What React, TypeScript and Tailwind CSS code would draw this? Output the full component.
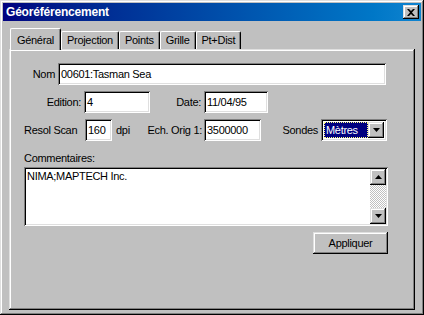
import type { ReactNode } from 'react'

const raised =
    'shadow-[inset_-1px_-1px_#000000,inset_1px_1px_#dfdfdf,inset_-2px_-2px_#808080,inset_2px_2px_#ffffff]'
const sunken =
    'shadow-[inset_1px_1px_#808080,inset_-1px_-1px_#ffffff,inset_2px_2px_#000000,inset_-2px_-2px_#dfdfdf]'

const TABS = ['Projection', 'Points', 'Grille', 'Pt+Dist']

function Field({ value, className }: { value: string; className: string }) {
    return (
        <div className={`h-[22px] bg-white flex items-center pl-[3px] text-black ${sunken} ${className}`}>
            {value}
        </div>
    )
}

function Label({ children, className }: { children: ReactNode; className: string }) {
    return <div className={`text-black whitespace-nowrap ${className}`}>{children}</div>
}

function Arrow({ down }: { down?: boolean }) {
    return (
        <svg width="7" height="4" viewBox="0 0 7 4">
            <path d={down ? 'M0 0h7L3.5 4z' : 'M0 4h7L3.5 0z'} fill="#000" />
        </svg>
    )
}

export default function App() {
    return (
        <div
            className={`w-[424px] h-[315px] bg-[#c0c0c0] flex flex-col text-[11px] tracking-[-0.3px] ${raised}`}
            style={{ fontFamily: '"Liberation Sans", Arial, sans-serif' }}
        >
            {/* Title bar */}
            <div className="mx-[3px] mt-[3px] h-[18px] flex items-center justify-between pl-[3px] pr-[2px] bg-gradient-to-r from-[#000080] to-[#1084d0]">
                <span className="text-white font-bold text-[12px] tracking-[-0.2px]">Géoréférencement</span>
                <div className={`w-[16px] h-[14px] bg-[#c0c0c0] flex items-center justify-center ${raised}`}>
                    <svg width="8" height="7" viewBox="0 0 8 7">
                        <path d="M0 0h2l2 2 2-2h2L5 3.5 8 7H6L4 5 2 7H0l3-3.5z" fill="#000" />
                    </svg>
                </div>
            </div>

            {/* Tabs */}
            <div className="mt-[7px] ml-[9px] flex items-end h-[21px]">
                <div className="relative z-10 -mb-[1px] ml-[1px] h-[22px] w-[51px] bg-[#c0c0c0] border-t border-l border-white rounded-tl-[2px] border-r border-r-black rounded-tr-[2px] shadow-[inset_-1px_0_#808080] flex items-start justify-center pt-[3px] text-black">
                    Général
                </div>
                {TABS.map(tab => (
                    <div
                        key={tab}
                        className="h-[18px] px-[5px] bg-[#c0c0c0] border-t border-l border-white rounded-tl-[2px] border-r border-r-black rounded-tr-[2px] shadow-[inset_-1px_0_#808080] flex items-center justify-center text-black"
                    >
                        {tab}
                    </div>
                ))}
            </div>

            {/* Panel */}
            <div className={`ml-[9px] w-[406px] h-[261px] flex flex-col pl-[15px] pt-[14px] ${raised}`}>
                <div className="flex items-center">
                    <Label className="w-[31px] text-right">Nom</Label>
                    <Field value="00601:Tasman Sea" className="ml-[3px] w-[328px]" />
                </div>

                <div className="flex items-center mt-[6px]">
                    <Label className="w-[57px] text-right">Edition:</Label>
                    <Field value="4" className="ml-[3px] w-[66px]" />
                    <Label className="w-[51px] text-right">Date:</Label>
                    <Field value="11/04/95" className="ml-[3px] w-[64px]" />
                </div>

                <div className="flex items-center mt-[6px]">
                    <Label className="w-[59px]">Resol Scan</Label>
                    <Field value="160" className="ml-[2px] w-[27px]" />
                    <Label className="ml-[4px] w-[16px]">dpi</Label>
                    <Label className="w-[70px] text-right">Ech. Orig 1:</Label>
                    <Field value="3500000" className="ml-[2px] w-[57px]" />
                    <Label className="w-[57px] text-right">Sondes</Label>
                    <div className={`ml-[3px] w-[66px] h-[22px] bg-white flex items-center p-[3px] ${sunken}`}>
                        <div className="flex-1 h-full bg-[#000080] text-white outline-1 outline-dotted outline-[#ffff80] -outline-offset-1 flex items-center pl-[2px]">
                            Mètres
                        </div>
                        <div className={`w-[16px] h-[16px] bg-[#c0c0c0] flex items-center justify-center ${raised}`}>
                            <Arrow down />
                        </div>
                    </div>
                </div>

                <Label className="mt-[9px] h-[14px]">Commentaires:</Label>
                <div className={`mt-[3px] w-[364px] h-[59px] bg-white flex p-[2px] ${sunken}`}>
                    <div className="flex-1 pl-[1px] pt-[1px] text-black leading-[13px]">NIMA;MAPTECH Inc.</div>
                    <div className="w-[16px] flex flex-col">
                        <div className={`h-[16px] bg-[#c0c0c0] flex items-center justify-center ${raised}`}>
                            <Arrow />
                        </div>
                        <div className="flex-1 bg-[repeating-conic-gradient(#c0c0c0_0_25%,#ffffff_0_50%)] bg-[length:2px_2px]" />
                        <div className={`h-[16px] bg-[#c0c0c0] flex items-center justify-center ${raised}`}>
                            <Arrow down />
                        </div>
                    </div>
                </div>

                <div className="flex justify-end w-[364px] mt-[6px]">
                    <div className={`w-[75px] h-[22px] bg-[#c0c0c0] flex items-center justify-center text-black ${raised}`}>
                        Appliquer
                    </div>
                </div>
            </div>
        </div>
    )
}
